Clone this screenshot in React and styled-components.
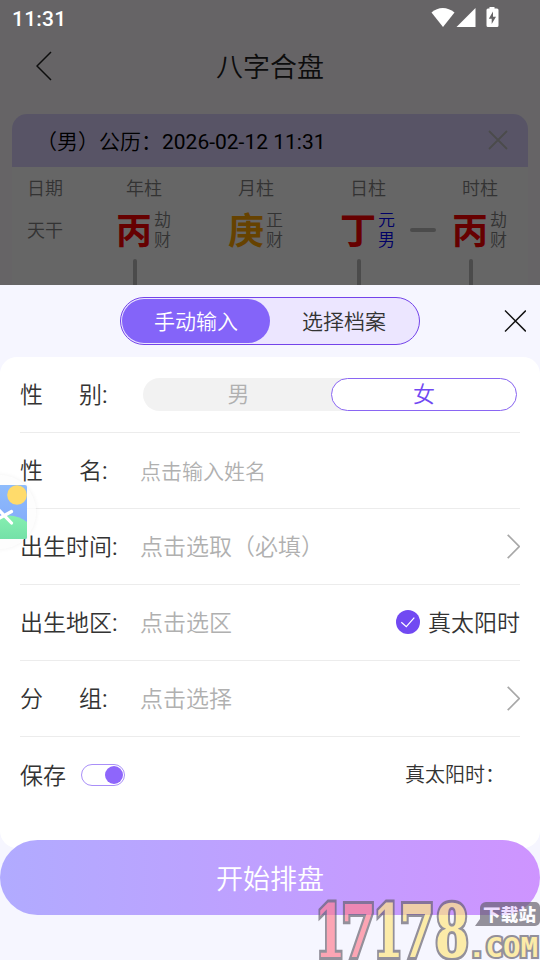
import React, { useState } from "react";
import styled, { createGlobalStyle } from "styled-components";

const pillars = [
  { title: "年柱", stem: "丙", color: "#ff0000", gods: ["劫", "财"], bar: true },
  { title: "月柱", stem: "庚", color: "#ffa500", gods: ["正", "财"] },
  {
    title: "日柱",
    stem: "丁",
    color: "#ff0000",
    gods: ["元", "男"],
    godColor: "#0000ff",
    bar: true,
    link: true,
  },
  { title: "时柱", stem: "丙", color: "#ff0000", gods: ["劫", "财"], bar: true },
];

const digits = [
  { char: "1", x: 315, width: 30, color: "#ff7f92" },
  { char: "7", x: 341, width: 35, color: "#ff7f92" },
  { char: "1", x: 373, width: 30, color: "#ffe780" },
  { char: "7", x: 399, width: 36, color: "#ffe780" },
  { char: "8", x: 435, width: 34, color: "#ffe780" },
];

const ArrowRight = () => (
  <svg width="13" height="25" viewBox="0 0 13 25" fill="none">
    <path d="M0.7 0.8L12.2 12.5L0.7 24.2" stroke="#a8a8a8" strokeWidth="1.7" />
  </svg>
);

const StatusIcons = () => (
  <svg width="68" height="20" viewBox="0 0 68 20">
    <path d="M0.5 5.6C7.2 -0.4 16.3 -0.4 23.5 5.6L12 20Z" fill="#fff" />
    <path d="M44.5 1V20H25.5Z" fill="#fff" />
    <path
      d="M58.5 0h5v1.600h2.500a1.500 1.500 0 0 1 1.500 1.500v15.400a1.500 1.500 0 0 1-1.500 1.500h-9a1.500 1.500 0 0 1-1.500-1.500V3.100a1.500 1.500 0 0 1 1.500-1.500H58.500Z"
      fill="#fff"
    />
    <path
      d="M62 4.500L57.800 11.800H60.700V17L65 9.800H62Z"
      fill="#666466"
    />
  </svg>
);

const AlbumIcon = () => (
  <svg width="27" height="54" viewBox="0 0 27 54">
    <defs>
      <linearGradient id="sky" x1="0" y1="0" x2="0" y2="1">
        <stop offset="0" stopColor="#8fbcfb" />
        <stop offset="1" stopColor="#7fa6fb" />
      </linearGradient>
      <linearGradient id="hill" x1="0" y1="0" x2="0" y2="1">
        <stop offset="0" stopColor="#86efb0" />
        <stop offset="1" stopColor="#74e1a8" />
      </linearGradient>
    </defs>
    <path d="M0 0H25a2 2 0 0 1 2 2V52a2 2 0 0 1-2 2H0Z" fill="url(#sky)" />
    <path d="M0 32C10 29 19 31 27 37V52a2 2 0 0 1-2 2H0Z" fill="url(#hill)" />
    <circle cx="17" cy="10" r="9.800" fill="#ffdb6b" />
    <path
      d="M-2 34L11.500 26.500M-2 24L11.500 38"
      stroke="#fff"
      strokeWidth="3.200"
      strokeLinecap="round"
    />
  </svg>
);

const Watermark = () => (
  <Mark width="226" height="62" viewBox="314 898 226 62">
    <g
      fontFamily="DejaVu Serif, serif"
      fontWeight="700"
      stroke="#65606c"
      strokeLinejoin="miter"
      paintOrder="stroke"
    >
      {digits.map((d, i) => (
        <text
          key={i}
          x={d.x}
          y="957"
          fontSize="73"
          strokeWidth="6"
          textLength={d.width}
          lengthAdjust="spacingAndGlyphs"
          fill={d.color}
        >
          {d.char}
        </text>
      ))}
      <text
        x="468"
        y="957"
        fontSize="26"
        fontFamily="DejaVu Sans Mono, monospace"
        strokeWidth="4"
        textLength="70"
        lengthAdjust="spacingAndGlyphs"
        fill="#ffe780"
      >
        .COM
      </text>
    </g>
    <path
      d="M486 902H535a5 5 0 0 1 5 5V921a5 5 0 0 1-5 5H475L480 919V908a6 6 0 0 1 6-6Z"
      fill="#65606c"
    />
    <text
      x="483"
      y="921"
      fontSize="17.500"
      fontWeight="900"
      fontFamily="Noto Sans CJK SC, sans-serif"
      fill="#fff"
      textLength="53"
    >
      下载站
    </text>
  </Mark>
);

export default function App() {
  const [tab, setTab] = useState("manual");
  const [gender, setGender] = useState("female");
  const [save, setSave] = useState(true);

  return (
    <Screen>
      <GlobalStyle />
      <Page>
        <TitleBar>
          <svg width="16" height="30" viewBox="0 0 16 30" fill="none">
            <path d="M15 1L1 15L15 29" stroke="#222" strokeWidth="1.500" />
          </svg>
          <h1>八字合盘</h1>
        </TitleBar>
        <Chart>
          <ChartHead>
            <p>
              （男）公历：<Latin>2026-02-12 11:31</Latin>
            </p>
            <svg width="20" height="20" viewBox="0 0 20 20">
              <path
                d="M1 1L19 19M19 1L1 19"
                stroke="#bbb"
                strokeWidth="1.800"
              />
            </svg>
          </ChartHead>
          <Pillars>
            <RowNames>
              <p>日期</p>
              <p>天干</p>
            </RowNames>
            {pillars.map((p, i) => (
              <Pillar key={i}>
                <p>{p.title}</p>
                <Stem $color={p.color} $godColor={p.godColor}>
                  <b>{p.stem}</b>
                  <div>
                    {p.gods.map((god) => (
                      <span key={god}>{god}</span>
                    ))}
                  </div>
                  {p.link && <Link />}
                </Stem>
                {p.bar && <Bar />}
              </Pillar>
            ))}
          </Pillars>
        </Chart>
      </Page>
      <Backdrop />
      <StatusBar>
        <span>11:31</span>
        <StatusIcons />
      </StatusBar>

      <Sheet>
        <SheetHead>
          <Tabs>
            <Tab $active={tab === "manual"} onClick={() => setTab("manual")}>
              手动输入
            </Tab>
            <Tab $active={tab === "archive"} onClick={() => setTab("archive")}>
              选择档案
            </Tab>
          </Tabs>
          <CloseButton>
            <svg width="22" height="22" viewBox="0 0 22 22">
              <path
                d="M1 0.600L21.800 21.400M21.800 0.600L1 21.400"
                stroke="#111"
                strokeWidth="1.400"
              />
            </svg>
          </CloseButton>
        </SheetHead>

        <Form>
          <Row>
            <Label>
              <span>性</span>
              <span>别</span>
              <Latin>:</Latin>
            </Label>
            <Gender>
              <Option
                $active={gender === "male"}
                onClick={() => setGender("male")}
              >
                男
              </Option>
              <Option
                $active={gender === "female"}
                onClick={() => setGender("female")}
              >
                女
              </Option>
            </Gender>
          </Row>
          <Row>
            <Label>
              <span>性</span>
              <span>名</span>
              <Latin>:</Latin>
            </Label>
            <Placeholder $size={21}>点击输入姓名</Placeholder>
          </Row>
          <Row>
            <Label>
              出生时间<Latin>:</Latin>
            </Label>
            <Placeholder>点击选取（必填）</Placeholder>
            <ArrowRight />
          </Row>
          <Row>
            <Label>
              出生地区<Latin>:</Latin>
            </Label>
            <Placeholder>点击选区</Placeholder>
            <SolarCheck>
              <svg width="24" height="24" viewBox="0 0 24 24" fill="none">
                <circle cx="12" cy="12" r="12" fill="#7149f2" />
                <path
                  d="M5.300 12.200L10.300 16.600L18.300 7.600"
                  stroke="#fff"
                  strokeWidth="1.200"
                />
              </svg>
              <span>真太阳时</span>
            </SolarCheck>
          </Row>
          <Row>
            <Label>
              <span>分</span>
              <span>组</span>
              <Latin>:</Latin>
            </Label>
            <Placeholder>点击选择</Placeholder>
            <ArrowRight />
          </Row>
          <Row $last>
            <SaveLabel>保存</SaveLabel>
            <Switch $on={save} onClick={() => setSave(!save)} />
            <SolarTime>真太阳时：</SolarTime>
          </Row>
        </Form>
        <Submit>开始排盘</Submit>
      </Sheet>

      <FloatBall>
        <AlbumIcon />
      </FloatBall>
      <Watermark />
    </Screen>
  );
}

const GlobalStyle = createGlobalStyle`
  * {
    box-sizing: border-box;
    margin: 0;
    padding: 0;
  }
  body {
    font-family: Roboto, "Noto Sans CJK SC", sans-serif;
    font-weight: 350;
    color: #333;
  }
  svg {
    display: block;
    flex: none;
  }
  button {
    font: inherit;
    border: none;
    background: none;
  }
`;

const Screen = styled.div`
  position: relative;
  width: 540px;
  height: 960px;
  overflow: hidden;
  background: #fffaff;
`;

const Latin = styled.em`
  font-style: normal;
  font-weight: 400;
`;

const Page = styled.div`
  height: 285px;
  overflow: hidden;
  padding: 36px 12px 0;
`;

const TitleBar = styled.div`
  display: flex;
  align-items: center;
  height: 60px;
  margin-bottom: 18px;
  padding: 0 24px;
  h1 {
    flex: 1;
    margin-right: 16px;
    padding-top: 3px;
    text-align: center;
    font-size: 27px;
    font-weight: 350;
    line-height: 40px;
    color: #222;
  }
`;

const Chart = styled.div`
  height: 200px;
  background: #fff;
  border-radius: 15px 15px 0 0;
`;

const ChartHead = styled.div`
  display: flex;
  align-items: center;
  justify-content: space-between;
  height: 53px;
  padding: 0 20px 2px 24px;
  font-size: 21px;
  color: #000;
  background: #dcd3ff;
  border-radius: 15px 15px 0 0;
`;

const Pillars = styled.div`
  display: grid;
  grid-template-columns: 76px repeat(4, 112px);
  font-size: 18px;
  color: #808080;
  p {
    height: 42px;
    line-height: 44px;
  }
`;

const RowNames = styled.div`
  padding-left: 15px;
`;

const Pillar = styled.div`
  display: flex;
  flex-direction: column;
  align-items: center;
`;

const Stem = styled.div`
  position: relative;
  display: flex;
  align-items: center;
  gap: 2px;
  height: 42px;
  margin-right: 1px;
  b {
    font-size: 36px;
    font-weight: 700;
    line-height: 42px;
    padding-top: 4px;
    color: ${(props) => props.$color};
  }
  div {
    display: flex;
    flex-direction: column;
    font-size: 17px;
    line-height: 20px;
    color: ${(props) => props.$godColor || "#808080"};
  }
`;

/* dash that joins the day stem to the hour stem */
const Link = styled.i`
  position: absolute;
  left: 100%;
  top: 19px;
  width: 26px;
  height: 4px;
  margin-left: 15px;
  border-radius: 2px;
  background: #bbb;
`;

const Bar = styled.i`
  width: 4px;
  height: 40px;
  margin: 8px 18px 0 0;
  border-radius: 2px;
  background: #bbb;
`;

const Backdrop = styled.div`
  position: absolute;
  inset: 0;
  background: rgba(0, 0, 0, 0.6);
`;

const StatusBar = styled.div`
  position: absolute;
  top: 0;
  left: 0;
  right: 0;
  display: flex;
  justify-content: space-between;
  padding: 7px 41px 0 12px;
  color: #fff;
  span {
    font-size: 21px;
    font-weight: 500;
    line-height: 24px;
    letter-spacing: 0.2px;
  }
`;

const Sheet = styled.div`
  position: absolute;
  left: 0;
  right: 0;
  bottom: 0;
  height: 675px;
  background: #f6f6ff;
`;

const SheetHead = styled.div`
  display: flex;
  align-items: center;
  justify-content: flex-end;
  height: 72px;
  padding-right: 14px;
`;

const Tabs = styled.div`
  display: flex;
  width: 300px;
  height: 48px;
  padding: 1px;
  border: 1px solid #7444ea;
  border-radius: 24px;
  background: #ece6ff;
`;

const Tab = styled.button`
  width: 148px;
  padding-bottom: 2px;
  border-radius: 23px;
  font-size: 21px;
  color: ${(props) => (props.$active ? "#fff" : "#333")};
  background: ${(props) => (props.$active ? "#8464f9" : "transparent")};
`;

const CloseButton = styled.button`
  margin-left: 84px;
`;

const Form = styled.div`
  height: 491px;
  padding: 0 20px;
  background: #fff;
  border-radius: 17px;
`;

const Row = styled.div`
  display: flex;
  align-items: center;
  height: 76px;
  border-bottom: ${(props) => (props.$last ? "none" : "1px solid #ececec")};
`;

const Label = styled.div`
  display: flex;
  align-items: baseline;
  width: 120px;
  padding-bottom: 3px;
  font-size: 23px;
  white-space: nowrap;
  span:first-child {
    width: 59px;
  }
`;

const Placeholder = styled.div`
  flex: 1;
  padding-bottom: ${(props) => (props.$size ? 1 : 3)}px;
  font-size: ${(props) => props.$size || 23}px;
  color: #b0b0b0;
`;

const Gender = styled.div`
  display: flex;
  width: 374px;
  height: 33px;
  margin-left: 3px;
  border-radius: 17px;
  background: #f2f2f2;
`;

const Option = styled.button`
  width: 186px;
  font-size: 22px;
  line-height: 30px;
  border-radius: 17px;
  color: ${(props) => (props.$active ? "#7149f2" : "#b0b0b0")};
  border: 1px solid ${(props) => (props.$active ? "#8a66f3" : "transparent")};
  background: ${(props) => (props.$active ? "#fff" : "transparent")};
  &:first-child {
    width: 188px;
    padding-left: 3px;
  }
`;

const SolarCheck = styled.div`
  display: flex;
  align-items: center;
  gap: 8px;
  padding-bottom: 2px;
  font-size: 23px;
  span {
    padding-bottom: 1px;
  }
`;

const SaveLabel = styled.div`
  width: 61px;
  padding-bottom: 3px;
  font-size: 23px;
`;

const Switch = styled.button`
  display: flex;
  align-items: center;
  justify-content: ${(props) => (props.$on ? "flex-end" : "flex-start")};
  width: 44px;
  height: 22px;
  padding: 0 1px;
  border: 1px solid #a98ff8;
  border-radius: 11px;
  &::after {
    content: "";
    width: 18px;
    height: 18px;
    border-radius: 50%;
    background: #8e66fb;
  }
`;

const SolarTime = styled.div`
  margin-left: auto;
  margin-right: 15px;
  padding-bottom: 3px;
  font-size: 20px;
`;

const Submit = styled.button`
  display: block;
  width: 100%;
  height: 75px;
  margin-top: -8px;
  border-radius: 38px;
  font-size: 27px;
  color: #fff;
  background: linear-gradient(90deg, #b1abff, #ce94ff);
`;

const FloatBall = styled.div`
  position: absolute;
  left: -38px;
  top: 475px;
  display: flex;
  align-items: center;
  justify-content: flex-end;
  width: 74px;
  height: 74px;
  padding-right: 9px;
  border-radius: 50%;
  background: rgba(252, 252, 252, 0.8);
  box-shadow: 0 0 5px rgba(0, 0, 0, 0.06);
`;

const Mark = styled.svg`
  position: absolute;
  right: 0;
  bottom: 0;
  opacity: 0.68;
`;
